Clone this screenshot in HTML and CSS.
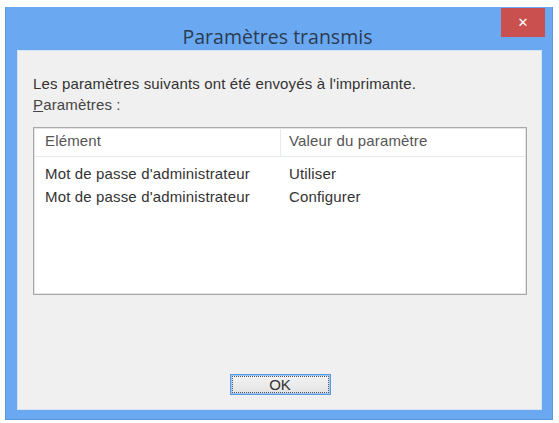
FILE: index.html
```html
<!DOCTYPE html>
<html lang="fr">

<head>
  <meta charset="UTF-8" />
  <title>Paramètres transmis</title>
  <link rel="stylesheet" href="styles.css">
</head>

<body>
  <!-- fenetre de dialogue -->
  <div class="win">
    <!-- barre de titre -->
    <div class="titlebar">
      <span class="title">Paramètres transmis</span>
      <a href="#" class="close">&#x2715;</a>
    </div>

    <!-- contenu -->
    <div class="body">
      <p class="msg">Les paramètres suivants ont été envoyés à l'imprimante.</p>
      <p class="label"><u>P</u>aramètres :</p>

      <!-- liste -->
      <div class="list">
        <div class="row head">
          <span class="c1">Elément</span>
          <span class="c2">Valeur du paramètre</span>
        </div>
        <div class="row">
          <span class="c1">Mot de passe d'administrateur</span>
          <span class="c2">Utiliser</span>
        </div>
        <div class="row">
          <span class="c1">Mot de passe d'administrateur</span>
          <span class="c2">Configurer</span>
        </div>
      </div>

      <!-- bouton -->
      <div class="foot">
        <button class="btn"><span>OK</span></button>
      </div>
    </div>
  </div>
</body>

</html>
```

FILE: styles.css
```css
/* reset */
html,
body,
p {
  margin: 0;
  padding: 0;
}

body {
  background-color: #fff;
  font-family: "Liberation Sans", Arial, sans-serif;
}

/* fenetre */
.win {
  position: relative;
  display: flex;
  flex-direction: column;
  width: 548px;
  height: 413px;
  margin: 7px 0 0 5px;
  box-sizing: border-box;
  padding: 0 10px 9px 11px;
  background-color: #6aa9f2;
  border: 1px solid #5b95dc;
  border-top: 0;
}

/* barre de titre */
.titlebar {
  display: flex;
  justify-content: center;
  align-items: flex-end;
  height: 43px;
  flex: none;
}

.title {
  font-family: "Open Sans", "Noto Sans", sans-serif;
  font-size: 19.5px;
  line-height: 26px;
  color: #2a3b52;
  margin-left: -4px;
}

/* bouton fermer */
.close {
  position: absolute;
  top: 1px;
  right: 7px;
  display: flex;
  justify-content: center;
  align-items: center;
  width: 44px;
  height: 29px;
  background-color: #c9504f;
  color: #fff;
  font-family: "DejaVu Sans", sans-serif;
  font-size: 13px;
  font-weight: bold;
  text-decoration: none;
}

/* zone contenu */
.body {
  flex: 1;
  display: flex;
  flex-direction: column;
  background-color: #f0f0f0;
  border: 1px solid #d5e3f4;
  padding: 24px 14px 14px 15px;
  font-size: 15px;
  letter-spacing: 0.15px;
  color: #333;
}

.msg {
  line-height: 17px;
}

.label {
  margin-top: 4px;
  line-height: 17px;
  color: #444;
}

/* liste */
.list {
  margin-top: 14px;
  height: 166px;
  background-color: #fff;
  border: 1px solid #a9a9a9;
  box-shadow: inset 0 0 0 1px #e4e4e4;
}

.row {
  display: flex;
  height: 23px;
  line-height: 23px;
}

.row.head {
  height: 28px;
  line-height: 26px;
  margin-bottom: 5px;
  border-bottom: 1px solid #e6ebf0;
  color: #555;
}

.c1 {
  width: 247px;
  padding-left: 11px;
  box-sizing: border-box;
}

.head .c1 {
  border-right: 1px solid #e6ebf0;
}

.c2 {
  padding-left: 8px;
}

/* pied */
.foot {
  display: flex;
  justify-content: center;
  margin-top: auto;
}

.btn {
  width: 101px;
  height: 21px;
  padding: 1px;
  border: 1px solid #5a9ae6;
  background: linear-gradient(#f3f3f3, #e3e3e3);
  box-shadow: inset 0 0 0 1px #9fc6f2;
  font-family: "Liberation Sans", Arial, sans-serif;
  font-size: 15px;
  color: #333;
}

.btn span {
  display: flex;
  justify-content: center;
  align-items: center;
  height: 100%;
  box-sizing: border-box;
  border: 1px dotted #555;
}
```
